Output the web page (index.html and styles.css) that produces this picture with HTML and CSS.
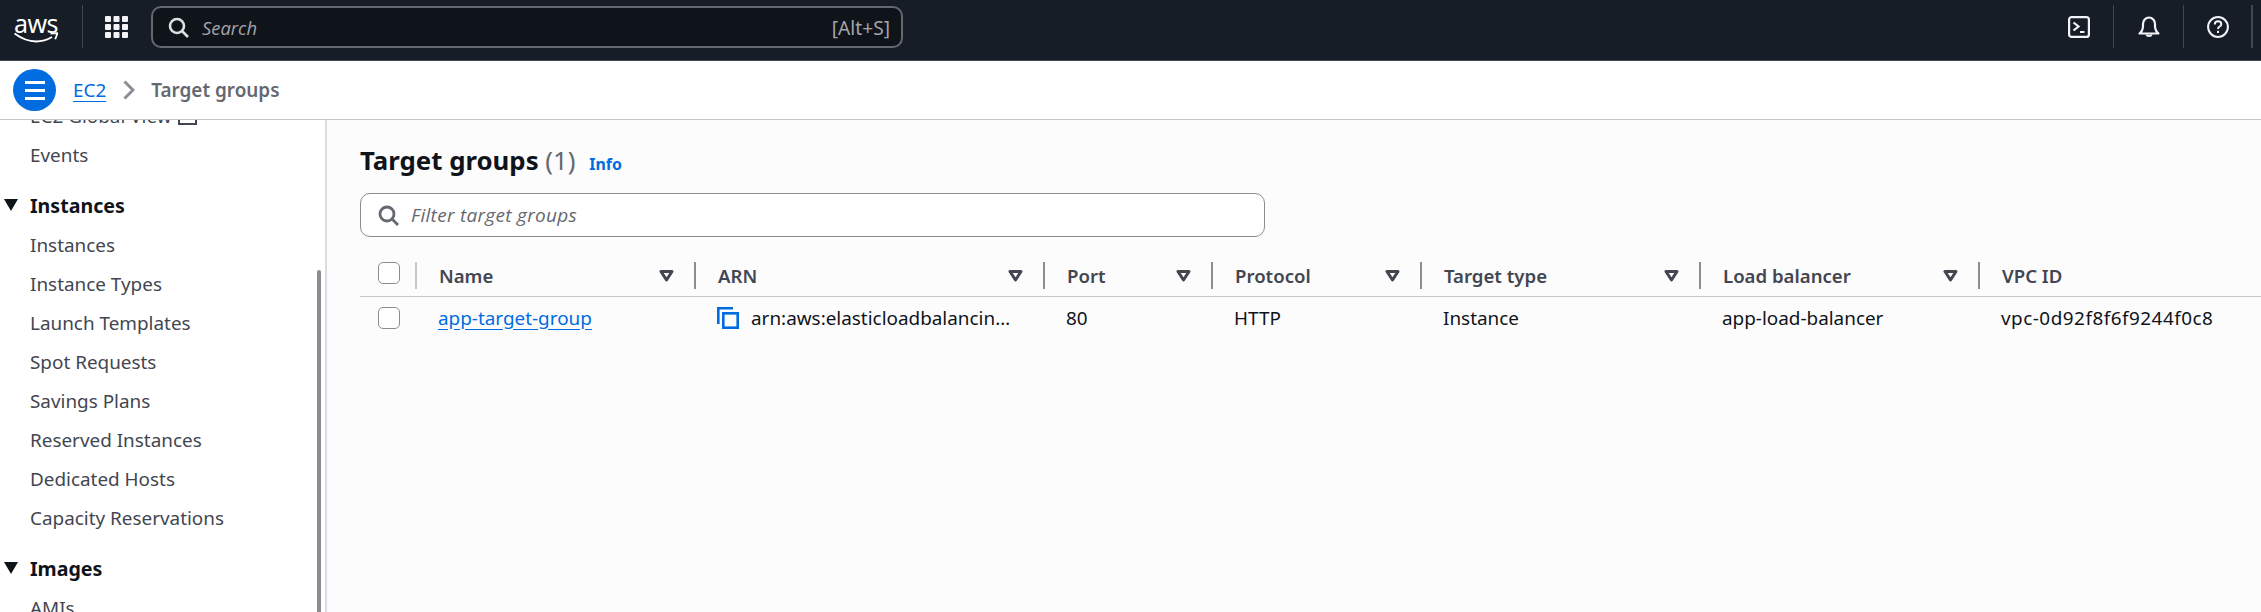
FILE: index.html
```html
<!DOCTYPE html>
<html lang="en">
<head>
<meta charset="utf-8">
<title>Target groups</title>
<link rel="stylesheet" href="styles.css">
</head>
<body>
<header class="topbar">
  <a class="logo">
    <span class="logo-text">aws</span>
    <svg class="logo-smile" viewBox="0 0 44 11" width="44" height="11" fill="none" stroke="#fff"><path d="M0.500 1.500C8 7 15 9.500 22 9.500c6 0 11-1.500 16-4.500" stroke-width="2"/><path d="M36.500 1.500l7-.3-2.300 6" stroke-width="1.800"/></svg>
  </a>
  <span class="top-sep"></span>
  <svg class="grid-icon" viewBox="0 0 23 22" width="23" height="22" fill="#f3f3f7"><rect x="0" y="0" width="6" height="6" rx="1"/><rect x="8.500" y="0" width="6" height="6" rx="1"/><rect x="17" y="0" width="6" height="6" rx="1"/><rect x="0" y="8" width="6" height="6" rx="1"/><rect x="8.500" y="8" width="6" height="6" rx="1"/><rect x="17" y="8" width="6" height="6" rx="1"/><rect x="0" y="16" width="6" height="6" rx="1"/><rect x="8.500" y="16" width="6" height="6" rx="1"/><rect x="17" y="16" width="6" height="6" rx="1"/></svg>
  <div class="search">
    <svg class="search-icon" viewBox="0 0 21 21" width="21" height="21" fill="none" stroke="#dedee3" stroke-width="2.600"><circle cx="9" cy="9" r="7"/><path d="M14 14l6 6"/></svg>
    <span class="search-ph">Search</span>
    <span class="search-key">[Alt+S]</span>
  </div>
  <div class="top-right">
    <button class="top-btn">
      <svg viewBox="0 0 22 22" width="22" height="22" fill="none" stroke="#f3f3f7" stroke-width="2.200"><rect x="1.100" y="1.100" width="19.800" height="19.800" rx="2.500"/><path d="M5.500 6.500l5 4-5 4M12 16h4.500"/></svg>
    </button>
    <span class="top-sep"></span>
    <button class="top-btn">
      <svg viewBox="0 0 22 22" width="22" height="22" fill="none" stroke="#f3f3f7" stroke-width="2.200"><path d="M1.500 17.500h19c-2.500-2-3.500-4-3.500-7.500v-2c0-3.500-2.500-6.500-6-6.500S5 4.500 5 8v2c0 3.500-1 5.500-3.500 7.500z" stroke-linejoin="round"/><path d="M8.500 18.500c.5 2 4.500 2 5 0" /></svg>
    </button>
    <span class="top-sep"></span>
    <button class="top-btn top-btn-help">
      <svg viewBox="0 0 22 22" width="22" height="22" fill="none" stroke="#f3f3f7" stroke-width="2"><circle cx="11" cy="11" r="9.900"/><path d="M7.800 8.500c0-2 1.500-3.200 3.300-3.200 1.800 0 3.200 1.200 3.200 2.900 0 2.400-3.300 2.300-3.300 4.800"/><path d="M11 14.700v2.200"/></svg>
    </button>
    <span class="top-sep top-sep-wide"></span>
  </div>
</header>

<div class="crumbbar">
  <button class="menu-btn">
    <svg viewBox="0 0 20 19" width="20" height="19" fill="none" stroke="#fff" stroke-width="3"><path d="M0 1.500h20M0 9.500h20M0 17.500h20"/></svg>
  </button>
  <a class="crumb-link">EC2</a>
  <svg class="crumb-chev" viewBox="0 0 12 20" width="12" height="20" fill="none" stroke="#8c8c94" stroke-width="3"><path d="M1.500 1.500l8.500 8.500-8.500 8.500"/></svg>
  <span class="crumb-current">Target groups</span>
</div>

<div class="content">
  <nav class="sidenav">
    <ul class="nav-list">
      <li class="nav-item nav-cut">EC2 Global View <span class="ext-box"></span></li>
      <li class="nav-item">Events</li>
      <li class="nav-head"><span class="caret"></span>Instances</li>
      <li class="nav-item">Instances</li>
      <li class="nav-item">Instance Types</li>
      <li class="nav-item">Launch Templates</li>
      <li class="nav-item">Spot Requests</li>
      <li class="nav-item">Savings Plans</li>
      <li class="nav-item">Reserved Instances</li>
      <li class="nav-item">Dedicated Hosts</li>
      <li class="nav-item">Capacity Reservations</li>
      <li class="nav-head"><span class="caret"></span>Images</li>
      <li class="nav-item">AMIs</li>
    </ul>
    <span class="nav-scroll"></span>
  </nav>
  <main class="main">
    <h1 class="title">Target groups <span class="count">(1)</span> <a class="info">Info</a></h1>
    <div class="filter">
      <svg viewBox="0 0 21 21" width="21" height="21" fill="none" stroke="#656871" stroke-width="2.800"><circle cx="9" cy="9" r="7"/><path d="M14 14l6 6"/></svg>
      <span class="filter-ph">Filter target groups</span>
    </div>
    <div class="table">
      <div class="row head-row">
        <div class="cell check-cell"><span class="check"></span></div>
        <div class="cell hcell hcell-first">Name<svg class="sort" viewBox="0 0 15 12" width="15" height="12" fill="none" stroke="#424650" stroke-width="3"><path d="M2 1.500h11L7.500 10z" stroke-linejoin="round"/></svg></div>
        <div class="cell hcell">ARN<svg class="sort" viewBox="0 0 15 12" width="15" height="12" fill="none" stroke="#424650" stroke-width="3"><path d="M2 1.500h11L7.500 10z" stroke-linejoin="round"/></svg></div>
        <div class="cell hcell">Port<svg class="sort" viewBox="0 0 15 12" width="15" height="12" fill="none" stroke="#424650" stroke-width="3"><path d="M2 1.500h11L7.500 10z" stroke-linejoin="round"/></svg></div>
        <div class="cell hcell">Protocol<svg class="sort" viewBox="0 0 15 12" width="15" height="12" fill="none" stroke="#424650" stroke-width="3"><path d="M2 1.500h11L7.500 10z" stroke-linejoin="round"/></svg></div>
        <div class="cell hcell">Target type<svg class="sort" viewBox="0 0 15 12" width="15" height="12" fill="none" stroke="#424650" stroke-width="3"><path d="M2 1.500h11L7.500 10z" stroke-linejoin="round"/></svg></div>
        <div class="cell hcell">Load balancer<svg class="sort" viewBox="0 0 15 12" width="15" height="12" fill="none" stroke="#424650" stroke-width="3"><path d="M2 1.500h11L7.500 10z" stroke-linejoin="round"/></svg></div>
        <div class="cell hcell">VPC ID</div>
      </div>
      <div class="row data-row">
        <div class="cell check-cell"><span class="check"></span></div>
        <div class="cell dcell"><a class="link">app-target-group</a></div>
        <div class="cell dcell arn">
          <svg viewBox="0 0 22 22" width="22" height="22" fill="none" stroke="#006ce0" stroke-width="2.600"><path d="M1.300 17V1.300H16"/><rect x="6.300" y="6.300" width="14.400" height="14.400"/></svg>
          <span class="arn-text">arn:aws:elasticloadbalancing:us-east-1:123456789012</span>
        </div>
        <div class="cell dcell">80</div>
        <div class="cell dcell">HTTP</div>
        <div class="cell dcell">Instance</div>
        <div class="cell dcell">app-load-balancer</div>
        <div class="cell dcell vpc">vpc-0d92f8f6f9244f0c8</div>
      </div>
    </div>
  </main>
</div>
</body>
</html>
```
FILE: styles.css
```css
* { box-sizing: border-box; }
html, body { margin: 0; padding: 0; height: 100%; overflow: hidden; }
body {
  font-family: "Noto Sans", "Open Sans", sans-serif;
  font-size: 18.900px;
  color: #0f141a;
  background: #fff;
  display: flex;
  flex-direction: column;
}
ul { list-style: none; margin: 0; padding: 0; }
button { background: none; border: 0; padding: 0; display: flex; }

.topbar {
  height: 61px;
  flex: none;
  background: #161d26;
  border-bottom: 1px solid #424650;
  display: flex;
  align-items: center;
  padding-left: 14px;
}
.logo { width: 44px; height: 27px; display: flex; flex-direction: column; align-items: center; margin-bottom: 6px; }
.logo-text { color: #fff; font-size: 25px; line-height: 19px; height: 18px; letter-spacing: -0.5px; }
.logo-smile { flex: none; }
.top-sep { width: 1px; height: 43px; background: #424650; flex: none; }
.logo + .top-sep { margin-left: 24px; margin-top: -7px; }
.grid-icon { margin-left: 22px; flex: none; margin-bottom: 6px; }
.search {
  margin-left: 23px;
  margin-bottom: 6px;
  width: 752px;
  height: 42px;
  background: #0f141a;
  border: 2px solid #656871;
  border-radius: 10px;
  display: flex;
  align-items: center;
  padding: 0 11px 0 15px;
}
.search-ph { margin-left: 13px; font-family: "Open Sans", "Noto Sans", sans-serif; font-style: italic; font-size: 18.400px; color: #a4a4ad; }
.search-key { margin-left: auto; color: #a4a4ad; font-size: 19.200px; }
.top-right { margin-left: auto; display: flex; align-items: center; margin-top: -7px; }
.top-btn { width: 69px; justify-content: center; }
.top-btn-help { width: 67px; }
.top-sep-wide { width: 2px; margin-right: 8px; }

.crumbbar {
  height: 59px;
  flex: none;
  background: #fff;
  border-bottom: 1px solid #c6c6cd;
  display: flex;
  align-items: center;
  padding-left: 13px;
  position: relative;
  z-index: 2;
}
.menu-btn {
  width: 43px;
  height: 42px;
  border-radius: 50%;
  background: #006ce0;
  align-items: center;
  justify-content: center;
}
.crumb-link { margin-left: 17px; color: #006ce0; text-decoration: underline; text-underline-offset: 4px; }
.crumb-chev { margin-left: 17px; }
.crumb-current { margin-left: 16px; font-weight: 600; font-size: 18.900px; color: #656871; }

.content { flex: 1; display: flex; min-height: 0; }
.sidenav {
  width: 327px;
  flex: none;
  background: #fff;
  border-right: 2px solid #dcdce1;
  overflow: hidden;
  position: relative;
}
.nav-list { margin-top: -23px; }
.nav-item { height: 39px; line-height: 39px; padding-left: 30px; color: #424650; white-space: nowrap; }
.nav-head { height: 39px; line-height: 39px; padding-left: 30px; font-size: 19.600px; font-weight: 700; color: #0f141a; position: relative; margin-top: 11px; }
.nav-head + .nav-item { margin-top: 1px; }
.caret {
  position: absolute;
  left: 4px;
  top: 13px;
  width: 0;
  height: 0;
  border-left: 7px solid transparent;
  border-right: 7px solid transparent;
  border-top: 12px solid #0f141a;
}
.ext-box { display: inline-block; width: 19px; height: 19px; border: 2.500px solid #424650; vertical-align: -2px; margin-left: 2px; }
.nav-scroll { position: absolute; right: 4px; top: 150px; bottom: 0; width: 4px; background: #8c8c94; border-radius: 2px 2px 0 0; }

.main { flex: 1; min-width: 0; background: #fcfcfd; padding: 0 0 0 33px; }
.title { margin: 23px 0 0; height: 34px; font-size: 25.800px; line-height: 34px; font-weight: 700; color: #0f141a; }
.count { font-weight: 400; color: #656871; }
.info { font-size: 15.900px; color: #006ce0; font-weight: 700; margin-left: 7px; }
.filter {
  margin-top: 16px;
  width: 905px;
  height: 44px;
  border: 1.500px solid #8c8c94;
  border-radius: 10px;
  background: #fff;
  display: flex;
  align-items: center;
  padding-left: 17px;
}
.filter-ph { margin-left: 12px; font-family: "Open Sans", "Noto Sans", sans-serif; font-style: italic; font-size: 19px; letter-spacing: .3px; color: #656871; }

.table { margin-top: 25px; }
.row {
  display: grid;
  grid-template-columns: 55px 279px 349px 168px 209px 279px 279px 1fr;
}
.head-row { height: 34.500px; border-bottom: 1.500px solid #c6c6cd; align-items: start; }
.cell { display: flex; align-items: center; min-width: 0; }
.check-cell { padding-left: 18px; }
.check { width: 22px; height: 22px; border: 1.500px solid #8c8c94; border-radius: 5px; background: #fff; display: block; }
.hcell {
  height: 27px;
  font-weight: 600;
  font-size: 18.600px;
  color: #424650;
  padding-left: 22px;
  padding-right: 20px;
  justify-content: space-between;
  border-left: 2px solid #8c8c94;
}
.hcell-first { border-left-color: #c6c6cd; }
.hcell .sort { flex: none; }
.data-row { height: 42px; }
.dcell { padding-left: 23px; color: #0f141a; white-space: nowrap; }
.vpc { letter-spacing: .5px; }
.link { color: #006ce0; text-decoration: underline; text-underline-offset: 4px; }
.arn svg { flex: none; margin-right: 12px; }
.arn-text { overflow: hidden; text-overflow: ellipsis; width: 262px; }
```
